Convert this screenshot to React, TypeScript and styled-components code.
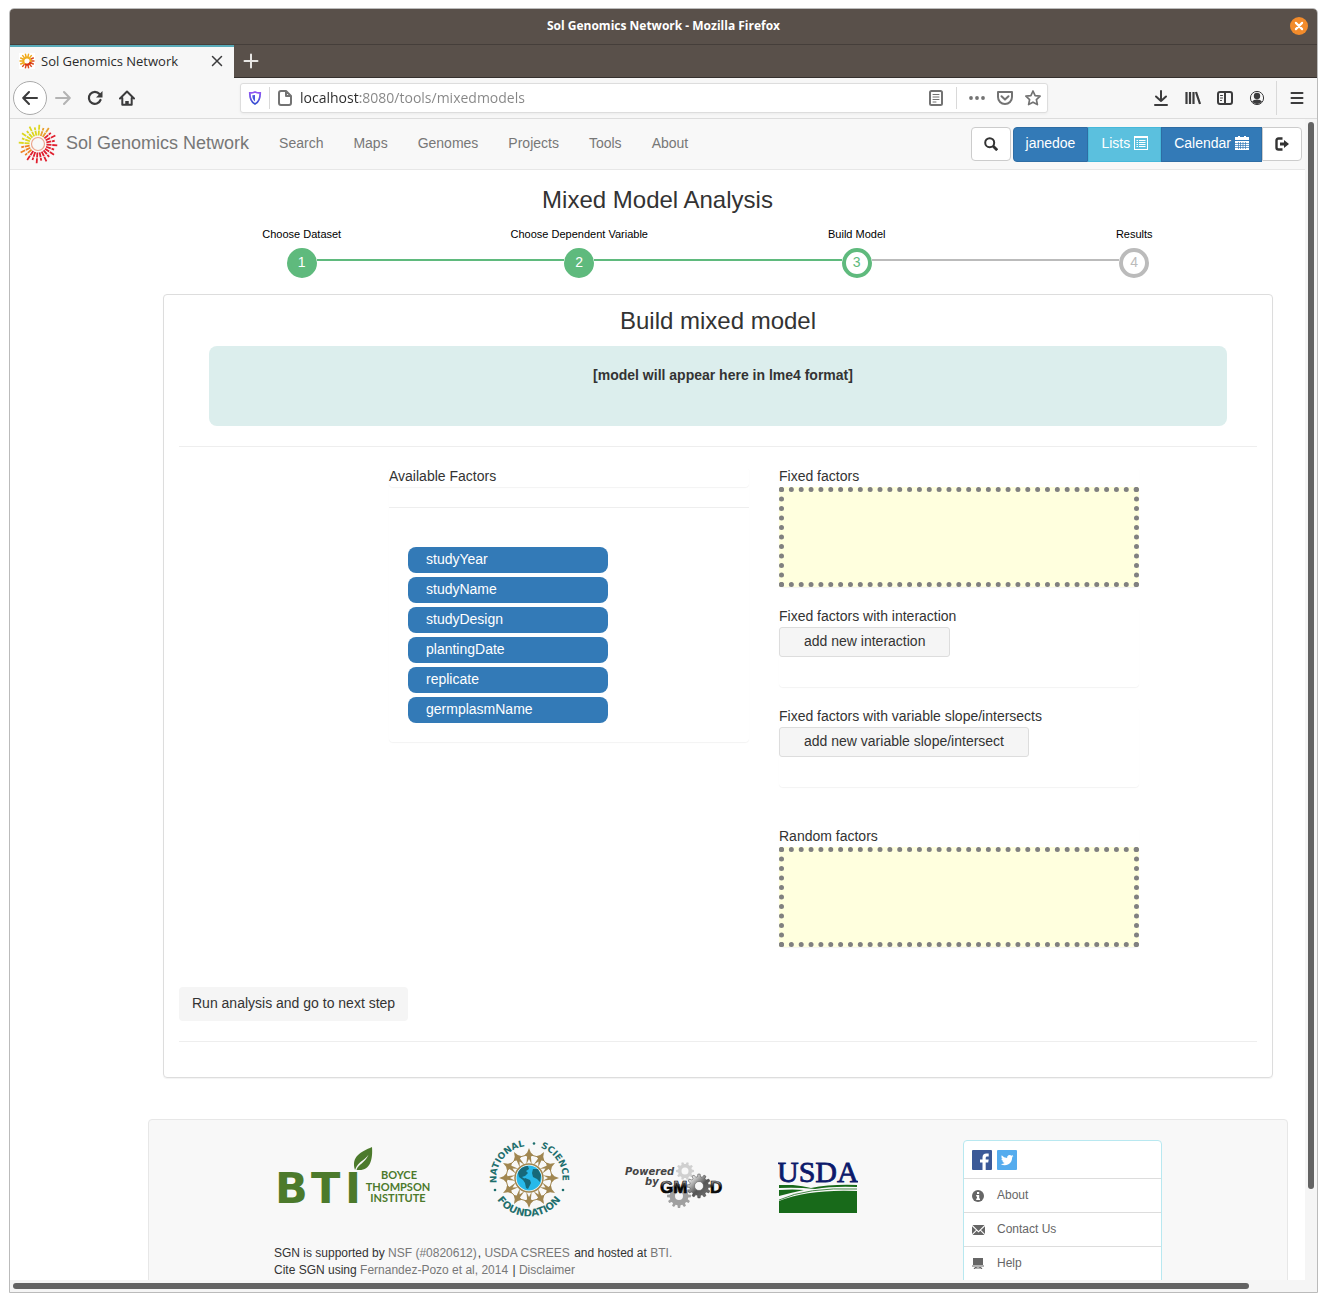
import React from 'react';
import styled, { createGlobalStyle } from 'styled-components';

const GlobalStyle = createGlobalStyle`
  * { box-sizing: border-box; }
  body {
    margin: 0;
    background: #fff;
    color: #333;
    font: 14px/20px "Liberation Sans", Arial, sans-serif;
  }
  button, input { font: inherit; }
  a { color: inherit; text-decoration: none; }
  svg { display: block; flex: none; }
`;

const chromeFont = '"Open Sans", "Noto Sans", sans-serif';

const Desktop = styled.div`
  height: 100vh;
  padding: 8px 9px 9px;
`;

const Window = styled.div`
  display: flex;
  flex-direction: column;
  height: 100%;
  border: 1px solid #bbb;
  border-radius: 5px 5px 0 0;
  overflow: hidden;
`;

const TitleBar = styled.header`
  display: grid;
  grid-template-columns: 1fr auto 1fr;
  align-items: center;
  flex: none;
  height: 36px;
  padding: 0 9px 1px;
  background: #59504a;
  border-bottom: 1px solid #453e3a;
  color: #fff;
  font: 700 12px/20px ${chromeFont};
`;

const WindowClose = styled.button`
  grid-column: 3;
  justify-self: end;
  display: grid;
  place-items: center;
  width: 18px;
  height: 18px;
  padding: 0;
  border: 0;
  border-radius: 50%;
  background: #f28b2b;
`;

const WindowTitle = styled.span`
  grid-column: 2;
`;

const TabStrip = styled.div`
  display: flex;
  flex: none;
  height: 33px;
  background: #59504a;
  border-bottom: 1px solid #35302d;
`;

const Tab = styled.div`
  display: flex;
  align-items: center;
  width: 224px;
  height: 33px;
  padding: 0 11px 3px 9px;
  gap: 6px;
  background: #f7f7f7;
  border-top: 2px solid #57aab8;
  color: #2b2b2b;
  font: 13px/20px ${chromeFont};
`;

const TabLabel = styled.span`
  flex: 1;
  white-space: nowrap;
`;

const IconButton = styled.button<{ $w?: number }>`
  display: grid;
  place-items: center;
  flex: none;
  width: ${(p) => p.$w ?? 32}px;
  height: 32px;
  padding: 0;
  border: 0;
  background: none;
  color: #3c3c3d;
`;

const Toolbar = styled.div`
  display: flex;
  align-items: center;
  flex: none;
  height: 41px;
  padding-left: 3px;
  background: #f7f7f7;
  border-bottom: 1px solid #dcdcdc;
`;

const BackButton = styled.button`
  display: grid;
  place-items: center;
  flex: none;
  width: 34px;
  height: 34px;
  padding: 0;
  border: 1px solid #aaa;
  border-radius: 50%;
  background: #fff;
  color: #3c3c3d;
`;

const UrlBar = styled.label`
  display: flex;
  align-items: center;
  flex: 1;
  height: 30px;
  margin: 0 97px;
  background: #fff;
  border: 1px solid #ddd;
  border-radius: 3px;
  box-shadow: 0 1px 3px rgba(0, 0, 0, 0.05);
  color: #737373;
`;

const UrlIcon = styled.span<{ $w: number }>`
  display: grid;
  place-items: center;
  flex: none;
  width: ${(p) => p.$w}px;
`;

const UrlInput = styled.input`
  flex: 1;
  min-width: 0;
  padding: 0;
  border: 0;
  outline: 0;
  font: 14px/20px ${chromeFont};
  color: transparent;
  background: linear-gradient(90deg, #2b2b2b 60px, #858585 60px);
  background-clip: text;
`;

const Divider = styled.span<{ $h: number; $before?: number; $after?: number }>`
  flex: none;
  width: 1px;
  height: ${(p) => p.$h}px;
  margin: 0 ${(p) => p.$after ?? 0}px 0 ${(p) => p.$before ?? 0}px;
  background: #d9d9d9;
`;

const Viewport = styled.div`
  display: grid;
  grid-template: minmax(0, 1fr) 12px / minmax(0, 1fr) 12px;
  flex: 1;
  min-height: 0;
  background: #f5f5f5;
`;

const Page = styled.div`
  overflow: hidden;
  background: #fff;
`;

const TrackV = styled.div`
  padding: 3px;
`;

const ThumbV = styled.div`
  width: 6px;
  height: calc(100% - 88px);
  border-radius: 3px;
  background: #636363;
`;

const TrackH = styled.div`
  grid-column: 1 / 3;
  padding: 3px;
`;

const ThumbH = styled.div`
  width: 95%;
  height: 6px;
  border-radius: 3px;
  background: #636363;
`;

const Navbar = styled.nav`
  display: flex;
  align-items: center;
  height: 51px;
  padding: 0 3px 0 8px;
  background: #f8f8f8;
  border-bottom: 1px solid #e7e7e7;
  color: #777;
`;

const Brand = styled.a`
  display: flex;
  align-items: center;
  gap: 8px;
  padding-right: 15px;
  font-size: 18px;
`;

const BrandName = styled.span`
  padding-bottom: 2px;
`;

const NavLink = styled.a`
  padding: 0 15px 2px;
`;

const NavActions = styled.div`
  display: flex;
  margin-left: auto;
  gap: 2px;
`;

const ButtonGroup = styled.div`
  display: flex;

  & > :first-child { border-radius: 4px 0 0 4px; }
  & > :last-child { border-radius: 0 4px 4px 0; }
`;

const tones = {
  plain: ['#fff', '#ccc', '#333'],
  primary: ['#337ab7', '#2e6da4', '#fff'],
  info: ['#5bc0de', '#46b8da', '#fff'],
};

const NavButton = styled.button<{ $tone: keyof typeof tones; $round?: boolean }>`
  display: flex;
  align-items: center;
  gap: 4px;
  height: ${(p) => (p.$tone === 'plain' ? '34px' : '35px')};
  padding: 0 12px ${(p) => (p.$tone === 'plain' ? '0' : '2px')};
  border: 1px solid ${(p) => tones[p.$tone][1]};
  border-radius: ${(p) => (p.$round ? '4px' : '0')};
  background: ${(p) => tones[p.$tone][0]};
  color: ${(p) => tones[p.$tone][2]};
  line-height: 20px;
`;

const Title = styled.h2`
  margin: 17px 0 13px;
  font-size: 24px;
  font-weight: 400;
  line-height: 26px;
  text-align: center;
`;

const Content = styled.main`
  margin: 0 32px 0 153px;
`;

const Steps = styled.ol`
  display: grid;
  grid-template-columns: repeat(4, 1fr);
  margin: 0 0 16px;
  padding: 0;
  list-style: none;
`;

const Step = styled.li`
  color: #000;
  font-size: 11px;
  line-height: 16px;
  text-align: center;
`;

const StepTrack = styled.div`
  display: flex;
  align-items: center;
  margin-top: 6px;
`;

const StepLine = styled.span<{ $color: string }>`
  flex: 1;
  height: 2px;
  margin-bottom: 6px;
  background: ${(p) => p.$color};
`;

const StepDot = styled.span<{ $state: string }>`
  width: 30px;
  height: 30px;
  border: 4px solid ${(p) => (p.$state === 'todo' ? '#bbb' : '#5fba7d')};
  border-radius: 50%;
  background: ${(p) => (p.$state === 'done' ? '#5fba7d' : '#fff')};
  color: ${(p) => (p.$state === 'done' ? '#fff' : p.$state === 'todo' ? '#bbb' : '#5fba7d')};
  font-size: 14px;
  line-height: 21px;
`;

const Panel = styled.section`
  padding: 13px 15px 15px;
  border: 1px solid #ddd;
  border-radius: 4px;
  box-shadow: 0 1px 1px rgba(0, 0, 0, 0.05);
`;

const PanelTitle = styled.h3`
  margin: 0 0 12px;
  font-size: 24px;
  font-weight: 400;
  line-height: 26px;
  text-align: center;
`;

const ModelPreview = styled.div`
  height: 80px;
  margin: 0 30px;
  padding: 19px 0 0 10px;
  border-radius: 8px;
  background: #dceeed;
  font-weight: 700;
  text-align: center;
`;

const Rule = styled.hr`
  margin: 20px 0;
  border: 0;
  border-top: 1px solid #eee;
`;

const Columns = styled.div`
  display: grid;
  grid-template-columns: minmax(0, 360px) minmax(0, 360px);
  align-items: start;
  gap: 30px;
  margin: 0 0 40px 210px;
`;

const Card = styled.section`
  border-radius: 4px;
  box-shadow: 0 1px 1px rgba(0, 0, 0, 0.05);
`;

const CardLabel = styled.div`
  padding-bottom: 2px;
  line-height: 18px;
`;

const FactorList = styled.ul`
  display: grid;
  gap: 4px;
  margin: 39px 0 0;
  padding: 0 0 19px 19px;
  list-style: none;
`;

const Factor = styled.li`
  width: 200px;
  height: 26px;
  padding-left: 18px;
  border-radius: 8px;
  background: #337ab7;
  color: #fff;
  line-height: 24px;
  cursor: move;
`;

const TargetStack = styled.div`
  display: grid;
  gap: 20px;
`;

const Target = styled(Card)<{ $spaced?: boolean }>`
  min-height: 80px;
  margin-top: ${(p) => (p.$spaced ? '20px' : '0')};
`;

const DropZone = styled.div`
  height: 100px;
  border: 5px dotted gray;
  background: #ffffde;
`;

const AddButton = styled.button`
  display: block;
  height: 30px;
  padding: 0 24px 2px;
  border: 1px solid #ddd;
  border-radius: 3px;
  background: #f5f5f5;
  color: #333;
`;

const RunButton = styled.button`
  display: block;
  height: 34px;
  padding: 0 13px 2px;
  border: 0;
  border-radius: 4px;
  background: #f5f5f5;
  color: #333;
`;

const Footer = styled.footer`
  display: grid;
  grid-template-columns: minmax(0, 1fr) 199px;
  margin: 41px 17px 0 138px;
  padding: 20px 125px;
  border: 1px solid #e7e7e7;
  border-radius: 4px;
  background: #f8f8f8;
  font-size: 12px;
  line-height: 17px;
`;

const Logos = styled.div`
  display: flex;
  gap: 55px;
  margin-bottom: 27px;
`;

const Credit = styled.p`
  margin: 0;

  a {
    margin-right: 1px;
    color: #777;
  }
`;

const LinkList = styled.ul`
  align-self: start;
  margin: 0;
  padding: 0 0 20px;
  border: 1px solid #b8e8f0;
  border-radius: 4px;
  background: #fff;
  color: #666;
  list-style: none;
`;

const LinkItem = styled.li<{ $tall?: boolean }>`
  display: flex;
  align-items: center;
  gap: ${(p) => (p.$tall ? '5px' : '12px')};
  height: ${(p) => (p.$tall ? '37px' : '34px')};
  padding: 0 8px;

  & + & { border-top: 1px solid #ddd; }
`;

const polar = (cx: number, cy: number, r: number, deg: number) => {
  const a = (deg * Math.PI) / 180;
  return [cx + r * Math.cos(a), cy + r * Math.sin(a)];
};

function Sun() {
  const rays = Array.from({ length: 24 }, (_, i) => i * 15 + 4);
  const tint = (d: number) =>
    d > 170 && d < 280 ? '#dcd620' : d > 125 && d <= 170 ? '#ee8226' : d >= 280 && d < 305 ? '#e8a030' : '#e0202f';
  return (
    <svg width="40" height="40" viewBox="0 0 40 40" fill="none">
      <circle cx="20" cy="20" r="6.500" stroke="#eba58f" strokeWidth="1.200" />
      {rays.map((d, i) => {
        const [x1, y1] = polar(20, 20, 8.5, d);
        const [x2, y2] = polar(20, 20, i % 2 ? 17 : 19.8, d);
        return (
          <path key={d} d={`M${x1} ${y1}L${x2} ${y2}`} stroke={tint(d)} strokeWidth="1.800" strokeDasharray="5 .8" />
        );
      })}
    </svg>
  );
}

function Favicon() {
  return (
    <svg width="16" height="16" viewBox="0 0 16 16" fill="none">
      <rect width="16" height="16" fill="#fff" />
      {Array.from({ length: 14 }, (_, i) => {
        const d = (i * 360) / 14;
        const [x1, y1] = polar(8, 8, 4, d);
        const [x2, y2] = polar(8, 8, 7.5, d);
        return <path key={i} d={`M${x1} ${y1}L${x2} ${y2}`} stroke={d > 150 && d < 330 ? '#efa91c' : '#dc4a1e'} strokeWidth="1.500" />;
      })}
      <circle cx="8" cy="8" r="3.600" stroke="#efae1e" strokeWidth="2" />
      <path d="M6 11a3.600 3.600 0 0 0 5.600-2" stroke="#d9301e" strokeWidth="2" />
    </svg>
  );
}

type StrokeProps = { size?: number; w?: number; children: React.ReactNode; color?: string };
function Stroke({ size = 16, w = 2, color = 'currentColor', children }: StrokeProps) {
  return (
    <svg width={size} height={size} viewBox="0 0 16 16" fill="none" stroke={color} strokeWidth={w} strokeLinecap="round" strokeLinejoin="round">
      {children}
    </svg>
  );
}

function gearPath(cx: number, cy: number, r: number, teeth: number, hole: number) {
  const step = 360 / teeth;
  const pts: string[] = [];
  for (let i = 0; i < teeth; i++) {
    const a = i * step;
    [[r * 0.78, -0.32], [r, -0.18], [r, 0.18], [r * 0.78, 0.32]].forEach(([rad, o]) => {
      const [x, y] = polar(cx, cy, rad, a + o * step);
      pts.push(`${x.toFixed(2)} ${y.toFixed(2)}`);
    });
  }
  return `M${pts.join('L')}ZM${cx - hole} ${cy}a${hole} ${hole} 0 1 0 ${hole * 2} 0a${hole} ${hole} 0 1 0 ${-hole * 2} 0Z`;
}

function BtiLogo() {
  return (
    <svg width="160" height="78" viewBox="0 0 160 78" fill="#4c7a2c">
      <g fontFamily="DejaVu Sans" fontWeight="700" fontSize="43">
        <text x="1" y="63">B</text>
        <text x="37" y="63">T</text>
        <text x="71" y="63">I</text>
      </g>
      <path d="M81 30c-4-14 6-18 17-23c1 13-2 24-14 23q-1 0-1.500-.3c2-6 8-6 12-15c-5 7-10 6-13.500 15.300z" />
      <g fontFamily="Lato" fontWeight="700" fontSize="11" textAnchor="middle">
        <text x="125" y="39">BOYCE</text>
        <text x="124" y="51">THOMPSON</text>
        <text x="124" y="62">INSTITUTE</text>
      </g>
    </svg>
  );
}

function NsfLogo() {
  const rays = Array.from({ length: 12 }, (_, i) => i * 30);
  const join = (pts: number[][]) => pts.map((p) => p.join(' ')).join('L');
  return (
    <svg width="80" height="78" viewBox="0 0 80 78" overflow="visible">
      <defs>
        <path id="ringLeft" d="M7.700 43a32.500 32.500 0 0 1 32.300-37" />
        <path id="ringRight" d="M51.500 7.600a32.500 32.500 0 0 1 18 46.500" />
        <path id="ringBottom" d="M1.500 38a38.500 38.500 0 0 0 77 0" />
      </defs>
      <circle cx="40" cy="38" r="14" fill="none" stroke="#a08650" strokeWidth="1.500" />
      {rays.map((d) => {
        const star = [
          polar(40, 38, 30, d), polar(40, 38, 25.5, d + 4), polar(40, 38, 23, d + 12),
          polar(40, 38, 21.5, d + 5), polar(40, 38, 14, d + 11), polar(40, 38, 19, d),
          polar(40, 38, 14, d - 11), polar(40, 38, 21.5, d - 5), polar(40, 38, 23, d - 12),
          polar(40, 38, 25.5, d - 4),
        ];
        const from = polar(40, 38, 23.5, d);
        const to = polar(40, 38, 23.5, d + 30);
        return (
          <g key={d}>
            <path fill="#a08650" d={`M${join(star)}Z`} />
            <path fill="none" stroke="#a08650" d={`M${from.join(' ')}L${to.join(' ')}`} />
          </g>
        );
      })}
      <circle cx="40" cy="38" r="12.500" fill="#27b9ea" />
      <path fill="#17697a" d="M29 33c2-5 6-7 10-7l1 3-3 2 2 2-3 3-3 1 3 2-2 1-4-3zM36 38l5 2 1 3-3 6-2-1-1-5-2-3zM44 29l5 0 3 6-1 7-3-3-4-2-1-4z" />
      <g fill="#1f6f6d" fontFamily="DejaVu Sans" fontWeight="700" fontSize="9">
        <text><textPath href="#ringLeft">NATIONAL</textPath></text>
        <text><textPath href="#ringRight">SCIENCE</textPath></text>
        <text fontSize="10"><textPath href="#ringBottom" startOffset="50%" textAnchor="middle">FOUNDATION</textPath></text>
        <circle cx="45" cy="3.500" r="1.300" />
        <circle cx="6" cy="50" r="1.300" />
        <circle cx="74" cy="50" r="1.300" />
      </g>
    </svg>
  );
}

function GmodLogo() {
  return (
    <svg width="99" height="78" viewBox="0 0 99 78">
      <defs>
        <linearGradient id="steel" x1="0" y1="0" x2="1" y2="1">
          <stop offset="0.200" stopColor="#ddd" />
          <stop offset="0.550" stopColor="#555" />
          <stop offset="1" stopColor="#777" />
        </linearGradient>
        <linearGradient id="letters" x1="0" y1="0" x2="0" y2="1">
          <stop offset="0.200" stopColor="#999" />
          <stop offset="0.500" stopColor="#000" />
          <stop offset="1" stopColor="#222" />
        </linearGradient>
      </defs>
      <path fill="#d0d0d0" fillRule="evenodd" d={gearPath(61, 31, 9, 10, 3.5)} />
      <path fill="#a0a0a0" fillRule="evenodd" d={gearPath(55, 56, 12, 12, 4)} />
      <g fill="#444" fontFamily="DejaVu Sans" fontWeight="700" fontStyle="italic" fontSize="10">
        <text x="1" y="35">Powered</text>
        <text x="21" y="45">by</text>
      </g>
      <path fill="url(#steel)" fillRule="evenodd" stroke="#444" strokeWidth=".5" d={gearPath(75, 46, 12, 12, 4.5)} />
      <g fill="url(#letters)" stroke="#000" strokeWidth=".6" fontFamily="Liberation Sans" fontWeight="700" fontSize="17">
        <text x="36" y="53">GM</text>
        <text x="86" y="53">D</text>
      </g>
    </svg>
  );
}

function UsdaLogo() {
  return (
    <svg width="80" height="78" viewBox="0 0 80 78">
      <text x="-1" y="42" fill="#0c1a6b" stroke="#0c1a6b" strokeWidth=".8" fontFamily="Liberation Serif" fontSize="30">USDA</text>
      <path fill="#186a1a" d="M1 45h14q10 1 18 3q20-4 46-3v2q-24-1-42 2q-18-2-36-1zM1 50q14-1 25 0q-14 3-25 6zM1 61q30-12 78-10v22H1z" />
      <path d="M1 60q28-13 78-11" fill="none" stroke="#186a1a" strokeWidth=".8" />
    </svg>
  );
}

const steps = [
  { label: 'Choose Dataset', state: 'done' },
  { label: 'Choose Dependent Variable', state: 'done' },
  { label: 'Build Model', state: 'active' },
  { label: 'Results', state: 'todo' },
];
const factors = ['studyYear', 'studyName', 'studyDesign', 'plantingDate', 'replicate', 'germplasmName'];
const navLinks = ['Search', 'Maps', 'Genomes', 'Projects', 'Tools', 'About'];

function lineColor(index: number) {
  if (index <= 0 || index >= steps.length) return 'transparent';
  return steps[index].state === 'todo' ? '#bbb' : '#5fba7d';
}

function BrowserChrome() {
  return (
    <>
      <TitleBar>
        <WindowTitle>Sol Genomics Network - Mozilla Firefox</WindowTitle>
        <WindowClose aria-label="Close window">
          <Stroke size={10} w={3.4} color="#fff"><path d="M3 3l10 10M13 3L3 13" /></Stroke>
        </WindowClose>
      </TitleBar>
      <TabStrip>
        <Tab>
          <Favicon />
          <TabLabel>Sol Genomics Network</TabLabel>
          <IconButton $w={12} aria-label="Close tab">
            <Stroke size={12} w={2}><path d="M2 2l12 12M14 2L2 14" /></Stroke>
          </IconButton>
        </Tab>
        <IconButton $w={34} aria-label="New tab">
          <Stroke w={2} color="#e8e6e4"><path d="M8 1.500v13M1.500 8h13" /></Stroke>
        </IconButton>
      </TabStrip>
      <Toolbar>
        <BackButton aria-label="Back">
          <Stroke><path d="M15 8H1.500M7 2L1.200 8L7 14" /></Stroke>
        </BackButton>
        <IconButton aria-label="Forward">
          <Stroke color="#b3b3b3"><path d="M1 8h13.500M9 2l5.800 6L9 14" /></Stroke>
        </IconButton>
        <IconButton aria-label="Reload">
          <svg width="16" height="16" viewBox="0 0 16 16" fill="none">
            <path d="M12.500 4A6 6 0 1 0 13.500 10" stroke="currentColor" strokeWidth="2.200" strokeLinecap="round" />
            <path d="M15.500 1v6.500H9z" fill="currentColor" />
          </svg>
        </IconButton>
        <IconButton aria-label="Home">
          <Stroke><path d="M1 8.500L8 1.500l7 7M3.300 8v6.800h9.400V8" /><path d="M8 11v3" strokeWidth="3.500" strokeLinecap="butt" /></Stroke>
        </IconButton>
        <UrlBar>
          <UrlIcon $w={28}>
            <svg width="14" height="14" viewBox="0 0 14 14" fill="none">
              <defs>
                <linearGradient id="shield" x1="0" y1="0" x2="0" y2="1">
                  <stop offset="0" stopColor="#9355f5" /><stop offset="1" stopColor="#3550d0" />
                </linearGradient>
              </defs>
              <path d="M7 1c2 1 4 1 5.200 1c0 6-1 9-5.200 11C2.800 11 1.800 8 1.800 2C3 2 5 2 7 1z" stroke="url(#shield)" strokeWidth="1.800" />
              <path d="M7 4v6.500C5 9 4.300 7 4.300 4.300z" fill="#4a55dd" />
            </svg>
          </UrlIcon>
          <Divider $h={22} />
          <UrlIcon $w={30}>
            <Stroke><path d="M2 3q0-2 2-2h5l5 5v7q0 2-2 2H4q-2 0-2-2zM9 1v5h5" /></Stroke>
          </UrlIcon>
          <UrlInput aria-label="Address" defaultValue="localhost:8080/tools/mixedmodels" />
          <UrlIcon $w={40}>
            <Stroke><rect x="2" y="1" width="12" height="14" rx="1.500" /><path d="M5 4.500h6M5 7h6M5 9.500h6M5 12h3" strokeWidth="1" /></Stroke>
          </UrlIcon>
          <Divider $h={22} $after={6} />
          <UrlIcon $w={28}>
            <svg width="16" height="16" viewBox="0 0 16 16" fill="currentColor"><circle cx="2" cy="8" r="1.900" /><circle cx="8" cy="8" r="1.900" /><circle cx="14" cy="8" r="1.900" /></svg>
          </UrlIcon>
          <UrlIcon $w={28}>
            <Stroke><path d="M1 2h14v5c0 4-3 7-7 7s-7-3-7-7zM4.500 6.300L8 9.600l3.500-3.300" /></Stroke>
          </UrlIcon>
          <UrlIcon $w={28}>
            <Stroke w={1.7}><path d="M8 1l2.100 4.600 5 .6-3.700 3.400 1 5L8 12.200l-4.400 2.400 1-5L.9 6.200l5-.6z" /></Stroke>
          </UrlIcon>
        </UrlBar>
        <IconButton aria-label="Downloads">
          <Stroke><path d="M8 1v10M3 6.500L8 11l5-4.500M2 15h12" /></Stroke>
        </IconButton>
        <IconButton aria-label="Library">
          <Stroke><path d="M1.500 2v12M5 2v12M8.500 2v12M11 2l4 12" strokeLinecap="butt" strokeWidth="2.200" /></Stroke>
        </IconButton>
        <IconButton aria-label="Sidebars">
          <Stroke><rect x="1" y="2" width="14" height="12" rx="2" /><path d="M8 2v12" /><path d="M3.500 5.500h2M3.500 8h2M3.500 10.500h1" strokeWidth="1" /></Stroke>
        </IconButton>
        <IconButton aria-label="Account">
          <svg width="16" height="16" viewBox="0 0 16 16" fill="currentColor">
            <circle cx="8" cy="8" r="6.600" fill="none" stroke="currentColor" strokeWidth="1" />
            <circle cx="8" cy="6" r="3.200" /><path d="M3 11.500q1.500-2 5-2t5 2q-2 2.500-5 2.500t-5-2.500z" />
          </svg>
        </IconButton>
        <Divider $h={34} $before={3} />
        <IconButton $w={40} aria-label="Menu">
          <Stroke><path d="M2.500 3h11M2.500 8h11M2.500 13h11" /></Stroke>
        </IconButton>
      </Toolbar>
    </>
  );
}

function SiteNav() {
  return (
    <Navbar>
      <Brand href="#"><Sun /><BrandName>Sol Genomics Network</BrandName></Brand>
      {navLinks.map((l) => <NavLink key={l} href="#">{l}</NavLink>)}
      <NavActions>
        <NavButton $tone="plain" $round aria-label="Search">
          <svg width="14" height="14" viewBox="0 0 14 14" fill="none" stroke="currentColor">
            <circle cx="5.700" cy="5.700" r="4.500" strokeWidth="2" /><path d="M9 9l4.200 4.200" strokeWidth="2.800" />
          </svg>
        </NavButton>
        <ButtonGroup>
          <NavButton $tone="primary">janedoe</NavButton>
          <NavButton $tone="info">
            Lists
            <svg width="14" height="14" viewBox="0 0 14 14" fill="none" stroke="currentColor">
              <rect x=".5" y=".5" width="13" height="13" /><path d="M0 1h14" strokeWidth="2" />
              <path d="M2.500 4.500h1.500M5 4.500h6.500M2.500 6.500h1.500M5 6.500h6.500M2.500 8.500h1.500M5 8.500h6.500M2.500 10.500h1.500M5 10.500h6.500" />
            </svg>
          </NavButton>
          <NavButton $tone="primary">
            Calendar
            <svg width="14" height="14" viewBox="0 0 14 14" fill="currentColor">
              <path d="M3 0h2v1h4V0h2v1h3v3H0V1h3zM0 5h14v9H0z" />
              <path d="M0 7.500h14M0 9.500h14M0 11.500h14M3.500 6v7M5.500 6v7M8 6v7M10.500 6v7" stroke="#337ab7" strokeWidth=".7" />
            </svg>
          </NavButton>
          <NavButton $tone="plain" aria-label="Log out">
            <svg width="14" height="14" viewBox="0 0 14 14">
              <path d="M7.500 1.500H3.500q-2 0-2 2v7q0 2 2 2h4" fill="none" stroke="currentColor" strokeWidth="2.400" />
              <path d="M5 5.500h4V3l5 4-5 4V8.500H5z" fill="currentColor" />
            </svg>
          </NavButton>
        </ButtonGroup>
      </NavActions>
    </Navbar>
  );
}

export default function App() {
  return (
    <Desktop>
      <GlobalStyle />
      <Window>
        <BrowserChrome />
        <Viewport>
          <Page>
            <SiteNav />
            <Title>Mixed Model Analysis</Title>
            <Content>
              <Steps>
                {steps.map((s, i) => (
                  <Step key={s.label}>
                    {s.label}
                    <StepTrack>
                      <StepLine $color={lineColor(i)} />
                      <StepDot $state={s.state}>{i + 1}</StepDot>
                      <StepLine $color={lineColor(i + 1)} />
                    </StepTrack>
                  </Step>
                ))}
              </Steps>
              <Panel>
                <PanelTitle>Build mixed model</PanelTitle>
                <ModelPreview>[model will appear here in lme4 format]</ModelPreview>
                <Rule />
                <Columns>
                  <Card>
                    <Card><CardLabel>Available Factors</CardLabel></Card>
                    <Rule />
                    <FactorList>
                      {factors.map((f) => <Factor key={f} draggable>{f}</Factor>)}
                    </FactorList>
                  </Card>
                  <TargetStack>
                    <Target>
                      <CardLabel>Fixed factors</CardLabel>
                      <DropZone />
                    </Target>
                    <Target>
                      <CardLabel>Fixed factors with interaction</CardLabel>
                      <AddButton>add new interaction</AddButton>
                    </Target>
                    <Target>
                      <CardLabel>Fixed factors with variable slope/intersects</CardLabel>
                      <AddButton>add new variable slope/intersect</AddButton>
                    </Target>
                    <Target $spaced>
                      <CardLabel>Random factors</CardLabel>
                      <DropZone />
                    </Target>
                  </TargetStack>
                </Columns>
                <RunButton>Run analysis and go to next step</RunButton>
                <Rule />
              </Panel>
            </Content>
            <Footer>
              <div>
                <Logos><BtiLogo /><NsfLogo /><GmodLogo /><UsdaLogo /></Logos>
                <Credit>SGN is supported by <a href="#">NSF (#0820612)</a>, <a href="#">USDA CSREES</a> and hosted at <a href="#">BTI.</a></Credit>
                <Credit>Cite SGN using <a href="#">Fernandez-Pozo et al, 2014</a> | <a href="#">Disclaimer</a></Credit>
              </div>
              <LinkList>
                <LinkItem $tall>
                  <a href="#" aria-label="Facebook">
                    <svg width="20" height="20" viewBox="0 0 20 20"><rect width="20" height="20" rx="1" fill="#3b5998" /><path fill="#fff" d="M10.500 20v-7.500H8V9.500h2.500V7.500Q10.500 3.500 14.500 3.500h2.200v3h-1.600q-1.400 0-1.400 1.400v1.600h3l-.5 3h-2.500V20z" /></svg>
                  </a>
                  <a href="#" aria-label="Twitter">
                    <svg width="20" height="20" viewBox="0 0 20 20"><rect width="20" height="20" rx="1" fill="#55acee" /><path fill="#fff" d="M16.500 6q-.6.300-1.500.400.800-.5 1.100-1.300-.8.400-1.600.6a2.600 2.600 0 0 0-4.400 2.300Q6.800 7.800 4.700 5.300q-1.100 2.200.8 3.500-.6 0-1.200-.3 0 2 2.100 2.600-.6.100-1.200 0 .6 1.700 2.400 1.800-1.600 1.300-3.900 1.100 2 1.200 4 1.200c5 0 7.500-4 7.400-7.800q.8-.6 1.400-1.400z" /></svg>
                  </a>
                </LinkItem>
                <LinkItem>
                  <svg width="13" height="12" viewBox="0 0 13 12"><circle cx="6" cy="6" r="6" fill="currentColor" /><path d="M5 2h2.200v2H5zM4.200 5h3v3.500H8V10H4.200V8.500H5V6.500h-.8z" fill="#fff" /></svg>
                  <a href="#">About</a>
                </LinkItem>
                <LinkItem>
                  <svg width="13" height="10" viewBox="0 0 13 10" fill="currentColor"><path d="M.5 0h12l-6 6zM0 1.200L4 5 0 9zM13 1.200L9 5l4 4zM.5 10l4.200-4.300L6.500 7.400l1.800-1.700L12.500 10z" /></svg>
                  <a href="#">Contact Us</a>
                </LinkItem>
                <LinkItem>
                  <svg width="13" height="12" viewBox="0 0 13 12" fill="currentColor"><path d="M1 0h10v7H1zM0 7.500h12v1H0zM3 9h2l-2 2H1.500zM7 9h2l1.500 2H9zM4 9.500h4v1H4z" /></svg>
                  <a href="#">Help</a>
                </LinkItem>
              </LinkList>
            </Footer>
          </Page>
          <TrackV><ThumbV /></TrackV>
          <TrackH><ThumbH /></TrackH>
        </Viewport>
      </Window>
    </Desktop>
  );
}
